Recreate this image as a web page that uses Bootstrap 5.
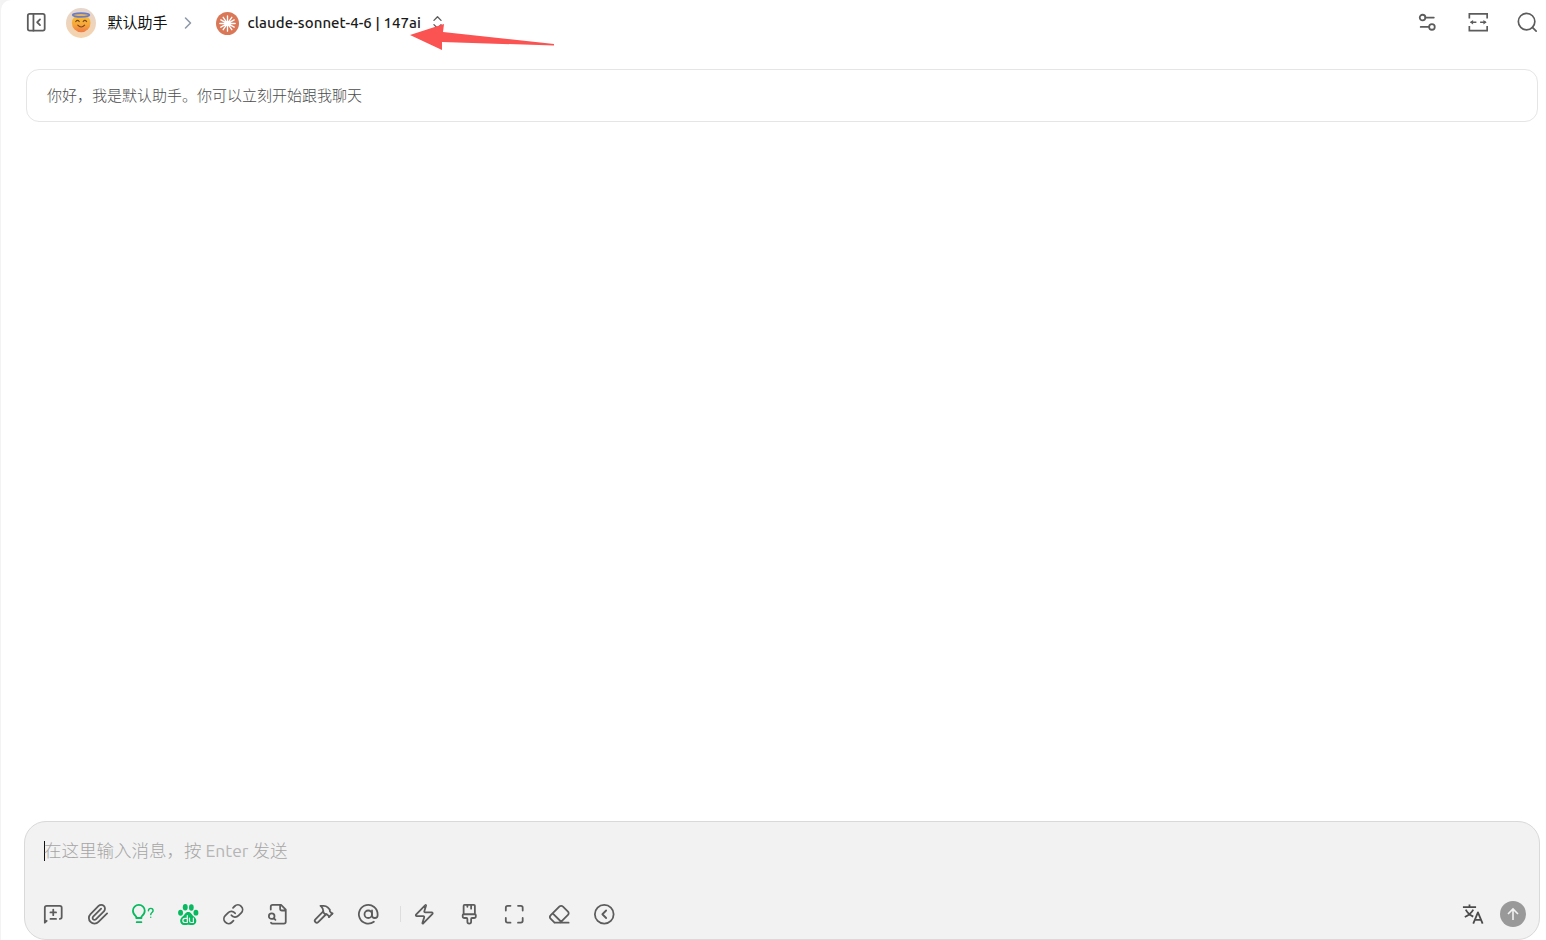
<!DOCTYPE html>
<html lang="zh-CN">
<head>
<meta charset="utf-8">
<meta name="viewport" content="width=device-width, initial-scale=1">
<title>默认助手</title>
<link rel="stylesheet" href="https://cdn.jsdelivr.net/npm/bootstrap@5.3.0/dist/css/bootstrap.min.css">
<style>
body{background:#f3f3f3;font-family:"Ubuntu","Noto Sans CJK SC",sans-serif;color:#1b1b1b}
.chat{height:940px;background:#fff;margin-left:1px;border-radius:10px 0 0 0}
.topbar{height:45px;padding:0 8px 0 24px}
.ico{width:22.5px;height:22.5px;fill:none;stroke:currentColor;stroke-width:1.9;stroke-linecap:round;stroke-linejoin:round;flex:none;display:block}
.gray{color:#5c5c5c}
.name{font-size:15px;line-height:22px;margin-left:12px;width:60px;color:#111}
.model{font-weight:500;font-size:15px;line-height:22px;margin-left:9px;width:185px;letter-spacing:.07px}
.greet{margin:24px 8px 0 25px;height:53px;border:1px solid #e5e5e5;border-radius:13px;padding:2px 20px 0;font-size:15px;font-weight:300;color:#4c4c4c}
.composer{margin:0 6px 0 23px;height:119px;border:1px solid #d9d9d9;border-radius:22px;background:#f2f2f2}
.hint{font-size:17.5px;line-height:26px;font-weight:300;color:#a5a5a5;padding:16px 0 0 19px;height:69px}
.hint .latin{font-weight:400;color:#b5b5b5}
.hint .copy{margin-left:-1px}
.caret{width:1px;height:20px;background:#111;margin-top:3px}
.tools{height:46px;padding:0 13px 0 6.2px}
.tool{width:45px;display:flex;justify-content:center}
.green{color:#07b95f}
.divider{width:1px;height:16px;background:#ddd;margin:0 .8px 0 8.8px}
.pointer{left:410px;top:22px}
</style>
</head>
<body>
<main class="chat d-flex flex-column">
<header class="topbar d-flex align-items-center">
<svg class="ico gray" viewBox="0 0 24 24"><rect x="3" y="3" width="18" height="18" rx="2"/><path d="M9 3v18m7-6-3-3 3-3"/></svg>
<svg width="30" height="30" viewBox="0 0 30 30" style="margin-left:18px"><defs><linearGradient id="skin" x2="0" y2="1"><stop stop-color="#f9c62f"/><stop offset=".6" stop-color="#f7a63a"/><stop offset="1" stop-color="#ee7a45"/></linearGradient><linearGradient id="disc" x2="0" y2="1"><stop stop-color="#e5d6cd"/><stop offset="1" stop-color="#f5d3ac"/></linearGradient></defs><circle cx="15" cy="15" r="15" fill="url(#disc)"/><circle cx="15.200" cy="15" r="9.300" fill="url(#skin)"/><ellipse cx="15" cy="7" rx="8.300" ry="1.900" fill="#e3b566" stroke="#6b7cc4" stroke-width="1.700"/><path d="M9.800 13.500q1.700-2.200 3.400 0m4 0q1.700-2.200 3.400 0M11.800 17.200q3.400 3.600 6.800 0" fill="none" stroke="#784624" stroke-width="1.200" stroke-linecap="round"/></svg>
<span class="name">默认助手</span>
<svg class="ico" viewBox="0 0 24 24" style="width:20px;height:20px;margin-left:10px;color:#8f99a8"><path d="m9 18 6-6-6-6"/></svg>
<svg width="23" height="23" viewBox="0 0 24 24" style="margin-left:18px;margin-top:1px"><circle cx="12" cy="12" r="12" fill="#d97757"/><path d="M12 4v16M4 12h16M7.500 5.500l9 13M16.500 5.500l-9 13M5 8.200l14 7.600M19 8.200 5 15.800" stroke="#fff" stroke-width="1.400" stroke-linecap="round"/></svg>
<span class="model text-nowrap">claude-sonnet-4-6 | 147ai</span>
<svg class="ico gray" viewBox="0 0 24 24" style="width:17px;height:17px;margin-left:-3.500px"><path d="m7 15 5 5 5-5M7 9l5-5 5 5"/></svg>
<div class="ms-auto d-flex align-items-center gray">
<svg class="ico" viewBox="0 0 24 24" style="margin-right:28.500px"><path d="M19 7h-9M14 17H5"/><circle cx="17" cy="17" r="3"/><circle cx="7" cy="7" r="3"/></svg>
<svg class="ico" viewBox="0 0 24 24" style="margin-right:26.500px;stroke-width:1.800;stroke-linecap:butt;stroke-linejoin:miter"><path d="M2.500 8V3h19v5M2.500 16v5h19v-5M4 12h6M14 12h6"/><path d="M6.500 9.500v5L3 12zM17.500 9.500v5L21 12z" fill="currentColor" stroke="none"/></svg>
<svg class="ico" viewBox="0 0 24 24" style="stroke-width:1.800"><circle cx="11.300" cy="11.300" r="8.800"/><path d="m21.500 21.500-4-4"/></svg>
</div>
</header>
<section class="greet d-flex align-items-center">你好，我是默认助手。你可以立刻开始跟我聊天</section>
<div class="flex-grow-1"></div>
<section class="composer">
<div class="hint d-flex"><span class="caret"></span><span class="copy text-nowrap">在这里输入消息，按 <span class="latin">Enter</span> 发送</span></div>
<div class="tools d-flex align-items-center gray">
<span class="tool"><svg class="ico" viewBox="0 0 24 24"><path d="m5 19-2 2V5a2 2 0 0 1 2-2h14a2 2 0 0 1 2 2v10a2 2 0 0 1-2 2M9 10h6M12 7v6M9 17h6"/></svg></span>
<span class="tool"><svg class="ico" viewBox="0 0 24 24"><path d="m21.440 11.050-9.190 9.190a6 6 0 0 1-8.490-8.490l8.570-8.570A4 4 0 1 1 18 8.840l-8.590 8.570a2 2 0 0 1-2.830-2.830l8.490-8.480"/></svg></span>
<span class="tool green"><svg class="ico" viewBox="0 0 24 24"><path d="M4.500 16v-1.500C2.500 13 1 11.500 1 8.300a6.300 6.300 0 0 1 12.600 0c0 3.200-1.500 4.700-3.500 6.200V16zM5 20.500h5"/><path d="M17.500 8.200c.2-3.400 5-3.200 5 0 0 2-2.500 2-2.500 4.200m0 2.800v.1" stroke-width="1.500"/></svg></span>
<span class="tool green"><svg class="ico" viewBox="0 0 24 24" style="fill:currentColor;stroke:none"><ellipse cx="3.800" cy="10.300" rx="2.600" ry="3.200"/><ellipse cx="8.800" cy="4.600" rx="2.600" ry="3.500"/><ellipse cx="15.300" cy="4.800" rx="2.500" ry="3.500"/><ellipse cx="20.200" cy="10.300" rx="2.600" ry="3.100"/><path d="M12 9.500c3 0 4 3 6 5 5 4 2 9-2 9-2 0-2-.4-4-.4s-2 .4-4 .4c-4 0-7-5-2-9 2-2 3-5 6-5z"/><path d="M11 13.500v7.300H8.500a2.200 2.200 0 0 1 0-4.500H11M13.300 16v2.800q0 2 2 2h2.200V16" fill="none" stroke="#f2f2f2" stroke-width="1.300"/></svg></span>
<span class="tool"><svg class="ico" viewBox="0 0 24 24"><path d="M10 13a5 5 0 0 0 7.540.54l3-3a5 5 0 0 0-7.070-7.070l-1.720 1.710M14 11a5 5 0 0 0-7.540-.54l-3 3a5 5 0 0 0 7.070 7.070l1.710-1.710"/></svg></span>
<span class="tool"><svg class="ico" viewBox="0 0 24 24"><path d="M14 2v4a2 2 0 0 0 2 2h4M4.268 21a2 2 0 0 0 1.727 1H18a2 2 0 0 0 2-2V7l-5-5H6a2 2 0 0 0-2 2v3M9 18l-1.500-1.500"/><circle cx="5" cy="14" r="3"/></svg></span>
<span class="tool"><svg class="ico" viewBox="0 0 24 24"><path d="m15 12-8.373 8.373a1 1 0 1 1-3-3L12 9M18 15l4-4"/><path d="m21.500 11.500-1.914-1.914A2 2 0 0 1 19 8.172V7l-2.260-2.260a6 6 0 0 0-4.202-1.756L9 2.960l.92.82A6.180 6.180 0 0 1 12 8.400V10l2 2h1.172a2 2 0 0 1 1.414.586L18.500 14.500"/></svg></span>
<span class="tool"><svg class="ico" viewBox="0 0 24 24"><circle cx="12" cy="12" r="4"/><path d="M16 8v5a3 3 0 0 0 6 0v-1a10 10 0 1 0-4 8"/></svg></span>
<span class="divider"></span>
<span class="tool"><svg class="ico" viewBox="0 0 24 24"><path d="M4 14a1 1 0 0 1-.78-1.630l9.900-10.200a.5.5 0 0 1 .86.46l-1.920 6.020A1 1 0 0 0 13 10h7a1 1 0 0 1 .78 1.630l-9.900 10.200a.5.5 0 0 1-.86-.46l1.920-6.020A1 1 0 0 0 11 14z"/></svg></span>
<span class="tool"><svg class="ico" viewBox="0 0 24 24"><path d="M10 2v2M14 2v4M17 2a1 1 0 0 1 1 1v9H6V3a1 1 0 0 1 1-1zM6 12a1 1 0 0 0-1 1v1a2 2 0 0 0 2 2h2a1 1 0 0 1 1 1v2.900a2 2 0 1 0 4 0V17a1 1 0 0 1 1-1h2a2 2 0 0 0 2-2v-1a1 1 0 0 0-1-1"/></svg></span>
<span class="tool"><svg class="ico" viewBox="0 0 24 24"><path d="M8 3H5a2 2 0 0 0-2 2v3M21 8V5a2 2 0 0 0-2-2h-3M3 16v3a2 2 0 0 0 2 2h3M16 21h3a2 2 0 0 0 2-2v-3"/></svg></span>
<span class="tool"><svg class="ico" viewBox="0 0 24 24"><path d="m7 21-4.300-4.300c-1-1-1-2.500 0-3.400l9.600-9.600c1-1 2.500-1 3.400 0l5.600 5.600c1 1 1 2.500 0 3.400L13 21M22 21H7M5 11l9 9"/></svg></span>
<span class="tool"><svg class="ico" viewBox="0 0 24 24"><circle cx="12" cy="12" r="10"/><path d="m14 16-4-4 4-4"/></svg></span>
<svg class="ico ms-auto" viewBox="0 0 24 24" style="stroke-linecap:butt;color:#4b4b4b;margin-right:16px"><path d="M1 4.500h14M8 1.500v3M4 7c2 4 5 6 8 7.500M12 7c-2 4-5 6-9 8M12 22l5-12 5 12M13.500 18h7"/></svg>
<svg width="26" height="26" viewBox="0 0 26 26"><circle cx="13" cy="13" r="13" fill="#999"/><path d="M13 19V8m-5 5 5-5 5 5" fill="none" stroke="#f2f2f2" stroke-width="1.600"/></svg>
</div>
</section>
</main>
<svg class="pointer position-absolute" width="146" height="30" viewBox="0 0 146 30"><path d="M0 13 34 2 33 10 144 22v1.500L32 20v8z" fill="#fb5252"/></svg>
<script src="https://cdn.jsdelivr.net/npm/bootstrap@5.3.0/dist/js/bootstrap.bundle.min.js"></script>
</body>
</html>
